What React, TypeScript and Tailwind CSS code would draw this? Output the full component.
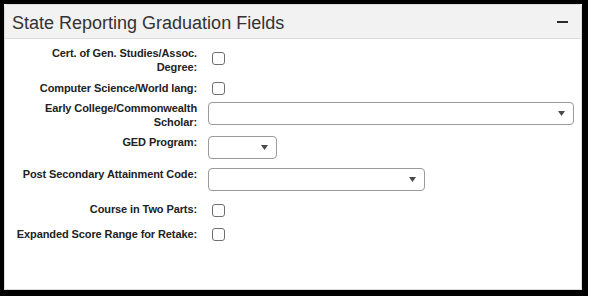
const Checkbox = ({ offset }: { offset: string }) => (
  <span className={`ml-[4px] block h-[13px] w-[13px] rounded-[3px] border border-[#6f6f6f] bg-white ${offset}`} />
);

const SelectBox = ({ width, offset }: { width: string; offset: string }) => (
  <div className={`flex h-[23px] items-center justify-end rounded-[4px] border border-[#9a9a9a] bg-white pr-[8px] ${width} ${offset}`}>
    <svg width="7" height="5" viewBox="0 0 7 5">
      <polygon points="0,0 7,0 3.5,5" fill="#4a4a4a" />
    </svg>
  </div>
);

const Label = ({ children }: { children: React.ReactNode }) => (
  <div className="w-[184px] shrink-0 whitespace-nowrap pt-[1px] text-right text-[11px] font-bold leading-[14px] tracking-[-0.1px] text-[#222]">
    {children}
  </div>
);

export default function App() {
  return (
    <div className="h-[299px] w-[591px] bg-white" style={{ fontFamily: '"Liberation Sans", Arial, sans-serif' }}>
      <div className="h-[296px] w-[588px] border-b-[6px] border-l-4 border-r-[6px] border-t-4 border-black">
        <div className="flex h-full flex-col rounded-t-[3px] border border-[#dcdcdc] bg-white">
          {/* Panel header */}
          <div className="flex h-[34px] shrink-0 items-center justify-between border-b border-[#dcdcdc] bg-[#f2f2f2] pl-[7px] pr-[13px]">
            <span className="pt-[2px] text-[18px] leading-[20px] text-[#333]">State Reporting Graduation Fields</span>
            <span className="block h-[2px] w-[11px] bg-[#2b2b2b]" />
          </div>

          {/* Fields */}
          <div className="flex flex-col pl-[8px] pt-[6px]">
            <div className="flex h-[35px] items-start gap-[11px]">
              <Label>
                Cert. of Gen. Studies/Assoc.
                <br />
                Degree:
              </Label>
              <Checkbox offset="mt-[7px]" />
            </div>
            <div className="flex h-[20px] items-start gap-[11px]">
              <Label>Computer Science/World lang:</Label>
              <Checkbox offset="mt-[2px]" />
            </div>
            <div className="flex h-[34px] items-start gap-[11px]">
              <Label>
                Early College/Commonwealth
                <br />
                Scholar:
              </Label>
              <SelectBox width="w-[366px]" offset="mt-[2px]" />
            </div>
            <div className="flex h-[32px] items-start gap-[11px]">
              <Label>GED Program:</Label>
              <SelectBox width="w-[69px]" offset="mt-[2px]" />
            </div>
            <div className="flex h-[35px] items-start gap-[11px]">
              <Label>Post Secondary Attainment Code:</Label>
              <SelectBox width="w-[217px]" offset="mt-[2px]" />
            </div>
            <div className="flex h-[25px] items-start gap-[11px]">
              <Label>Course in Two Parts:</Label>
              <Checkbox offset="mt-[3px]" />
            </div>
            <div className="flex h-[25px] items-start gap-[11px]">
              <Label>Expanded Score Range for Retake:</Label>
              <Checkbox offset="mt-[2px]" />
            </div>
          </div>
        </div>
      </div>
    </div>
  );
}
